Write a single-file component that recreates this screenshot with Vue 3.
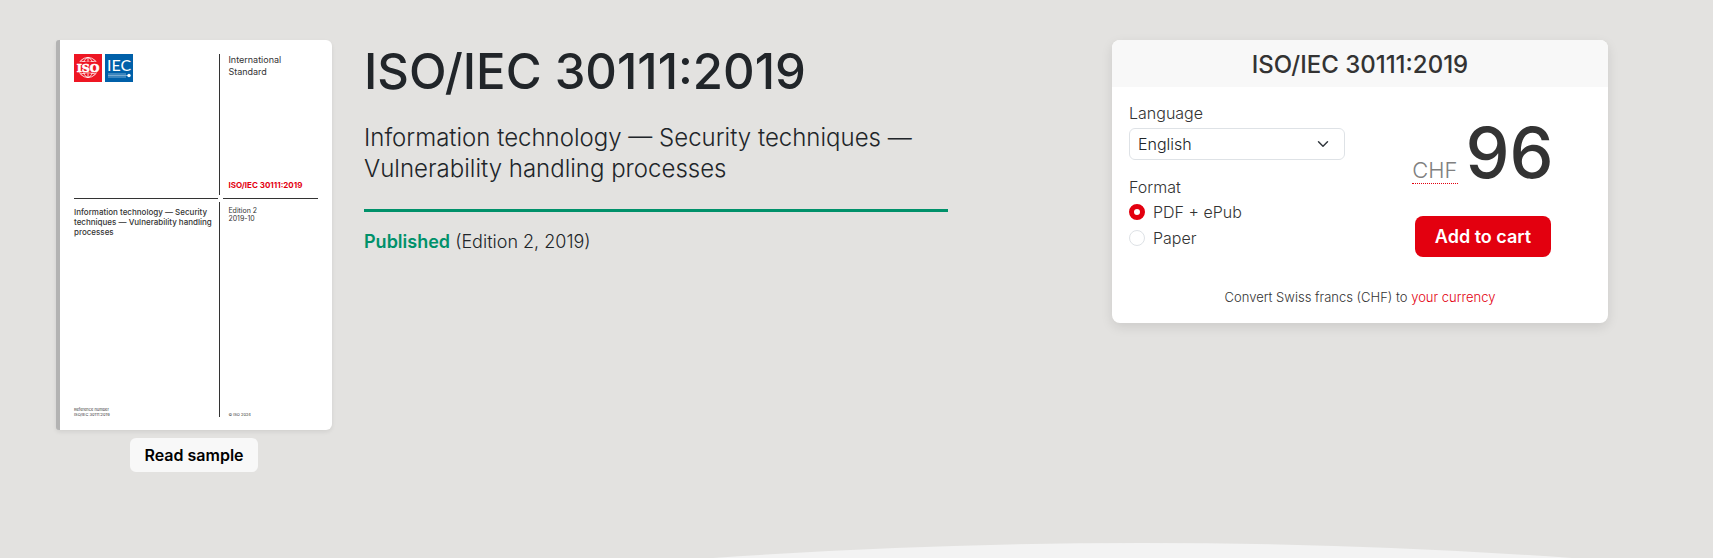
<template>
  <div class="page">
    <main class="hero">
      <div class="intro">
        <div class="sample">
          <div class="cover">
            <div class="cover-main cover-logos">
              <svg class="logo" viewBox="0 0 28 28" role="img" aria-label="ISO logo">
                <rect width="28" height="28" fill="#ee1623" />
                <g fill="none" stroke="#fff" stroke-width="0.8">
                  <circle cx="14" cy="13.500" r="10" />
                  <ellipse cx="14" cy="13.500" rx="5" ry="10" />
                  <path d="M14 3.500v20M6.500 7q7.500 3 15 0M6.500 20q7.500-3 15 0" />
                </g>
                <rect x="1" y="8" width="26" height="10.500" fill="#ee1623" />
                <text x="14" y="17.500" text-anchor="middle" class="iso-text">ISO</text>
              </svg>
              <svg class="logo" viewBox="0 0 28 28" role="img" aria-label="IEC logo">
                <rect width="28" height="28" fill="#0060a9" />
                <text x="14" y="17" text-anchor="middle" class="iec-text">IEC</text>
                <path d="M3 20h18M3 21.500h20M3 23h18" stroke="#a9cbe4" stroke-width="0.7" />
                <circle cx="24" cy="21.500" r="1.700" fill="#fff" />
              </svg>
            </div>
            <div class="cover-side split">
              <p class="doc-type">International<br />Standard</p>
              <p class="doc-ref">{{ reference }}</p>
            </div>
            <div class="line"></div>
            <div class="line line-side"></div>
            <div class="cover-main split">
              <p class="doc-title">{{ title }}</p>
              <p class="doc-foot">Reference number<br />{{ reference }}</p>
            </div>
            <div class="cover-side split">
              <p class="doc-edition">Edition 2<br />2019-10</p>
              <p class="doc-foot">© ISO 2024</p>
            </div>
          </div>
          <button type="button" class="btn-sample">Read sample</button>
        </div>

        <div class="details">
          <h1>{{ reference }}</h1>
          <h2>{{ title }}</h2>
          <p class="status"><strong>Published</strong> (Edition 2, 2019)</p>
        </div>
      </div>

      <form class="buy-card" @submit.prevent>
        <h3>{{ reference }}</h3>
        <div class="buy-body">
          <div class="options">
            <label for="language">Language</label>
            <select id="language" v-model="language">
              <option value="en">English</option>
              <option value="fr">French</option>
            </select>
            <fieldset>
              <legend>Format</legend>
              <label v-for="item in formats" :key="item.value" class="radio">
                <input v-model="format" type="radio" name="format" :value="item.value" />
                {{ item.label }}
              </label>
            </fieldset>
          </div>
          <div class="purchase">
            <div class="price">
              <abbr title="Swiss francs">CHF</abbr>
              <span class="amount">96</span>
            </div>
            <button type="submit" class="btn-cart">Add to cart</button>
          </div>
        </div>
        <p class="convert">Convert Swiss francs (CHF) to <a href="#">your currency</a></p>
      </form>
    </main>

    <svg class="curve" viewBox="0 0 1713 15" preserveAspectRatio="none" aria-hidden="true">
      <path d="M713 15Q1142 -15 1572 15Z" fill="#f3f3f3" />
    </svg>
  </div>
</template>

<script setup>
import { ref } from 'vue'

const reference = 'ISO/IEC 30111:2019'
const title = 'Information technology — Security techniques — Vulnerability handling processes'

const formats = [
  { value: 'pdf', label: 'PDF + ePub' },
  { value: 'paper', label: 'Paper' }
]

const language = ref('en')
const format = ref('pdf')
</script>

<style>
body {
  margin: 0;
  background: #e3e2e0;
}
</style>

<style scoped>
.page {
  display: flex;
  flex-direction: column;
  min-height: 100vh;
  font-family: Inter, "Liberation Sans", sans-serif;
  font-weight: 300;
  font-size: 16px;
  line-height: 24px;
  color: #212529;
}

.page * {
  box-sizing: border-box;
}

h1,
h2,
h3,
p {
  margin: 0;
}

button,
select {
  font-family: inherit;
}

.hero {
  display: grid;
  grid-template-columns: repeat(12, 1fr);
  column-gap: 32px;
  align-items: start;
  padding: 40px 105px 40px 56px;
}

.intro {
  grid-column: span 7;
  display: grid;
  grid-template-columns: repeat(3, 1fr);
  column-gap: 32px;
}

/* cover preview */
.sample {
  display: flex;
  flex-direction: column;
  align-items: center;
  gap: 8px;
}

.cover {
  display: grid;
  grid-template-columns: 3fr 2fr;
  grid-template-rows: 141px 1px 1fr;
  row-gap: 3px;
  width: 100%;
  aspect-ratio: 276 / 390;
  padding: 14px 14px 13px;
  border-left: 4px solid #b3b3b3;
  border-radius: 3px 6px 6px 3px;
  background: #fff;
  box-shadow: 0 2px 4px rgba(0, 0, 0, 0.08);
  color: #333;
}

.cover-main {
  border-right: 1px solid #333;
}

.cover-side {
  padding-left: 8px;
}

.cover-logos {
  display: flex;
  align-items: flex-start;
  gap: 3px;
}

.split {
  display: flex;
  flex-direction: column;
  justify-content: space-between;
}

.line {
  height: 1px;
  margin-right: 2px;
  background: #333;
}

.line-side {
  margin: 0 0 0 3px;
}

.logo {
  width: 28px;
  height: 28px;
}

.iso-text {
  font-family: "DejaVu Serif", serif;
  font-size: 11px;
  font-weight: 700;
  fill: #fff;
  stroke: #fff;
  stroke-width: 0.6;
}

.iec-text {
  font-family: Lato, sans-serif;
  font-size: 16px;
  font-weight: 400;
  fill: #fff;
}

.doc-type {
  font-size: 9px;
  font-weight: 400;
  line-height: 12px;
}

.doc-ref {
  padding-bottom: 4px;
  font-size: 8px;
  font-weight: 700;
  line-height: 12px;
  color: #e3000f;
}

.doc-title {
  padding-top: 5px;
  font-size: 8px;
  font-weight: 500;
  line-height: 10px;
}

.doc-edition {
  padding-top: 5px;
  font-size: 7px;
  font-weight: 400;
  line-height: 8px;
}

.doc-foot {
  font-size: 4px;
  font-weight: 400;
  line-height: 5px;
}

.btn-sample {
  height: 34px;
  padding: 0 14px;
  border: 0;
  border-radius: 6px;
  background: #f8f8f8;
  color: #000;
  font-size: 16px;
  font-weight: 600;
  cursor: pointer;
}

/* title block */
.details {
  grid-column: span 2;
}

h1 {
  font-size: 49px;
  font-weight: 500;
  line-height: 64px;
}

h2 {
  margin-top: 18px;
  padding-bottom: 25px;
  border-bottom: 3px solid #00916a;
  font-size: 24px;
  font-weight: 300;
  line-height: 31px;
}

.status {
  margin-top: 16px;
  font-size: 18px;
  line-height: 27px;
}

.status strong {
  font-weight: 600;
  color: #00916a;
}

/* purchase card */
.buy-card {
  grid-column: 9 / span 4;
  border-radius: 8px;
  overflow: hidden;
  background: #fff;
  box-shadow: 0 4px 12px rgba(0, 0, 0, 0.1);
  color: #333;
}

h3 {
  padding: 9px 16px 7px;
  background: #f8f8f8;
  font-size: 24px;
  font-weight: 500;
  line-height: 31px;
  text-align: center;
}

.buy-body {
  display: grid;
  grid-template-columns: 1fr 1fr;
  column-gap: 30px;
  padding: 14px 17px 0;
}

.options {
  display: flex;
  flex-direction: column;
}

select {
  appearance: none;
  height: 32px;
  margin-top: 3px;
  padding: 0 36px 0 8px;
  border: 1px solid #dee2e6;
  border-radius: 6px;
  background: #fff url("data:image/svg+xml,%3csvg xmlns='http://www.w3.org/2000/svg' viewBox='0 0 16 16'%3e%3cpath fill='none' stroke='%23343a40' stroke-linecap='round' stroke-linejoin='round' stroke-width='2' d='m2 5 6 6 6-6'/%3e%3c/svg%3e") no-repeat right 15px center / 12px 12px;
  color: #212529;
  font-size: 16px;
  font-weight: 300;
}

fieldset {
  display: flex;
  flex-direction: column;
  gap: 2px;
  margin: 15px 0 0;
  padding: 0;
  border: 0;
}

legend {
  margin-bottom: 1px;
  padding: 0;
}

.radio {
  display: flex;
  align-items: center;
  gap: 8px;
}

.radio input {
  appearance: none;
  width: 16px;
  height: 16px;
  margin: 0;
  border: 1px solid #dee2e6;
  border-radius: 50%;
  background: #fff;
}

.radio input:checked {
  border: 5px solid #e3000f;
}

.purchase {
  display: flex;
  flex-direction: column;
  align-items: center;
  gap: 23px;
  padding-top: 12px;
}

.price {
  display: flex;
  align-items: baseline;
  gap: 8px;
}

.price abbr {
  border-bottom: 1px dotted #e3000f;
  color: #808080;
  font-size: 22px;
  line-height: 26px;
  text-decoration: none;
}

.amount {
  font-size: 70px;
  font-weight: 500;
  line-height: 80px;
}

.btn-cart {
  height: 41px;
  padding: 0 20px;
  border: 0;
  border-radius: 8px;
  background: #e3000f;
  color: #fff;
  font-size: 18px;
  font-weight: 600;
  cursor: pointer;
}

.convert {
  padding: 30px 16px 16px;
  font-size: 13px;
  line-height: 20px;
  text-align: center;
}

.convert a {
  color: #e3000f;
  text-decoration: none;
}

.curve {
  display: block;
  width: 100%;
  height: 15px;
  margin-top: auto;
}
</style>
